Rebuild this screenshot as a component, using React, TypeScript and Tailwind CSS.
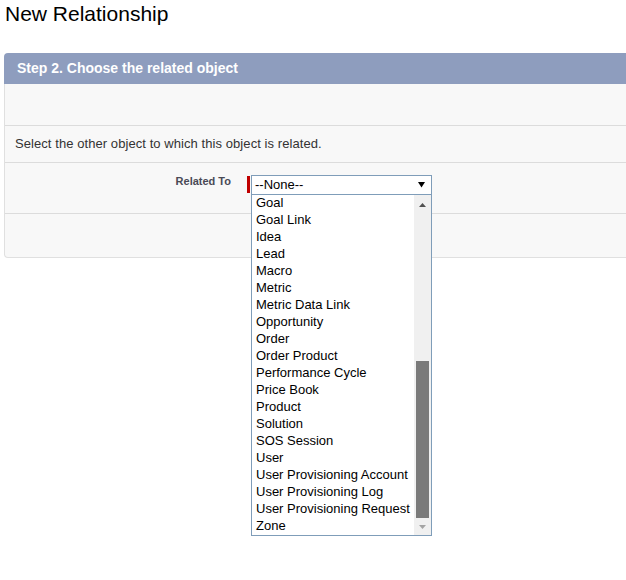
import React from "react";

const items = [
  "Goal",
  "Goal Link",
  "Idea",
  "Lead",
  "Macro",
  "Metric",
  "Metric Data Link",
  "Opportunity",
  "Order",
  "Order Product",
  "Performance Cycle",
  "Price Book",
  "Product",
  "Solution",
  "SOS Session",
  "User",
  "User Provisioning Account",
  "User Provisioning Log",
  "User Provisioning Request",
  "Zone",
];

export default function App() {
  return (
    <div
      className="relative w-[626px] h-[580px] overflow-hidden bg-white text-black"
      style={{ fontFamily: '"Liberation Sans", Arial, sans-serif' }}
    >
      <div className="pt-[2px] pl-[5px] text-[21px] leading-[24px]">New Relationship</div>
      <div className="mt-[27px] ml-[4px] w-[700px]">
        <div className="h-[31px] bg-[#8e9dbe] rounded-tl-[4px] flex items-center pl-[13px] text-[14px] font-bold text-white">
          Step 2. Choose the related object
        </div>
        <div className="bg-[#f8f8f8] border-l border-b border-[#e0e0e0] rounded-bl-[4px]">
          <div className="h-[42px] border-b border-[#dcdcdc]" />
          <div className="h-[37px] border-b border-[#dcdcdc] flex items-center pl-[10px] text-[13px] tracking-[0.07px] text-[#333]">
            Select the other object to which this object is related.
          </div>
          <div className="h-[51px] border-b border-[#dcdcdc] flex items-start">
            <div className="w-[226px] mt-[12px] text-right text-[11px] leading-[13px] font-bold text-[#4a4a56]">
              Related To
            </div>
            <div className="ml-[16px] mt-[13px] w-[3px] h-[17px] bg-[#c00000]" />
            <div className="relative ml-[1px] mt-[12px] w-[181px] h-[20px] border border-[#7f9db9] bg-white">
              <div className="pl-[3px] text-[13px] leading-[17px]">--None--</div>
              <svg className="absolute left-[166px] top-[6px]" width="7" height="6" viewBox="0 0 7 6">
                <path d="M0 0 H7 L3.5 5.5 Z" fill="#000" />
              </svg>
              <div className="absolute left-[-1px] top-[19px] w-[181px] border-l border-r border-b border-[#7f9db9] bg-white z-10">
                {items.map((it) => (
                  <div key={it} className="h-[17px] pl-[4px] text-[13px] leading-[16px] whitespace-nowrap">
                    {it}
                  </div>
                ))}
                <div className="absolute right-0 top-0 bottom-0 w-[17px] bg-[#f0f0f0]">
                  <svg className="absolute left-[5px] top-[8px]" width="7" height="4" viewBox="0 0 7 4">
                    <path d="M3.5 0 L7 4 H0 Z" fill="#505050" />
                  </svg>
                  <div className="absolute left-[2px] top-[166px] w-[13px] h-[157px] bg-[#7a7a7a]" />
                  <svg className="absolute left-[5px] top-[330px]" width="7" height="4" viewBox="0 0 7 4">
                    <path d="M0 0 H7 L3.5 4 Z" fill="#a3a3a3" />
                  </svg>
                </div>
              </div>
            </div>
          </div>
          <div className="h-[43px]" />
        </div>
      </div>
    </div>
  );
}
